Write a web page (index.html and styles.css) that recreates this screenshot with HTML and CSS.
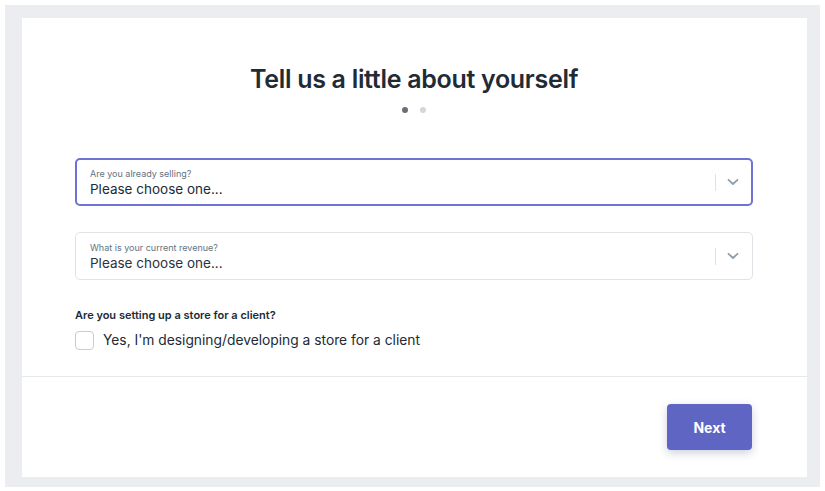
FILE: index.html
```html
<!DOCTYPE html>
<html lang="en">
<head>
<meta charset="utf-8">
<title>Tell us a little about yourself</title>
<link rel="stylesheet" href="styles.css">
</head>
<body>
<div class="frame">
  <div class="card">
    <div class="card-body">
      <h1 class="title">Tell us a little about yourself</h1>
      <div class="dots"><span class="dot active"></span><span class="dot"></span></div>
      <div class="select focused">
        <div class="select-text">
          <div class="select-label">Are you already selling?</div>
          <div class="select-value">Please choose one...</div>
        </div>
        <span class="select-sep"></span>
        <svg class="chev" width="12" height="8" viewBox="0 0 12 8"><path d="M1.5 1.8 L6 6 L10.5 1.8" fill="none" stroke="#919eab" stroke-width="1.8" stroke-linecap="round" stroke-linejoin="round"/></svg>
      </div>
      <div class="select">
        <div class="select-text">
          <div class="select-label">What is your current revenue?</div>
          <div class="select-value">Please choose one...</div>
        </div>
        <span class="select-sep"></span>
        <svg class="chev" width="12" height="8" viewBox="0 0 12 8"><path d="M1.5 1.8 L6 6 L10.5 1.8" fill="none" stroke="#919eab" stroke-width="1.8" stroke-linecap="round" stroke-linejoin="round"/></svg>
      </div>
      <div class="client-q">Are you setting up a store for a client?</div>
      <label class="check-row"><span class="checkbox"></span><span class="check-text">Yes, I'm designing/developing a store for a client</span></label>
    </div>
    <div class="card-footer">
      <button class="btn-next">Next</button>
    </div>
  </div>
</div>
</body>
</html>
```
FILE: styles.css
```css
html, body {
  margin: 0;
  padding: 0;
  background: #ffffff;
  font-family: Inter, "Liberation Sans", sans-serif;
  color: #212b36;
}
.frame {
  margin: 5px;
  padding: 13px 13px 10px 17px;
  background: #ebedf1;
}
.card {
  background: #ffffff;
  display: flex;
  flex-direction: column;
}
.card-body {
  padding: 44px 54px 26px 53px;
  border-bottom: 1px solid #e6e8eb;
}
.title {
  margin: 0;
  text-align: center;
  font-size: 25px;
  line-height: 34px;
  font-weight: 600;
  letter-spacing: -0.3px;
  color: #212b36;
}
.dots {
  display: flex;
  justify-content: center;
  gap: 12px;
  margin-top: 11px;
  margin-bottom: 45px;
}
.dot {
  width: 6px;
  height: 6px;
  border-radius: 50%;
  background: #d3d6da;
}
.dot.active {
  background: #6b6f75;
}
.select {
  display: flex;
  align-items: center;
  height: 46px;
  border: 1px solid #dfe3e8;
  border-radius: 5px;
  padding: 0 13px 0 14px;
  margin-bottom: 26px;
}
.select.focused {
  border: 2px solid #6e72d3;
  height: 44px;
  padding: 0 12px 0 13px;
  margin-bottom: 26px;
}
.select-text {
  flex: 1;
  padding-top: 2px;
}
.select-label {
  font-size: 9px;
  line-height: 12px;
  color: #637381;
}
.select-value {
  font-size: 13.5px;
  line-height: 19px;
  color: #212b36;
}
.select:not(.focused) .select-value {
  color: #2b333d;
}
.select-sep {
  width: 1px;
  height: 17px;
  background: #dfe3e8;
  margin-right: 11px;
}
.chev {
  display: block;
}
.client-q {
  margin-top: 28px;
  font-size: 11px;
  font-weight: 600;
  line-height: 14px;
  color: #212b36;
}
.check-row {
  display: flex;
  align-items: center;
  gap: 9px;
  margin-top: 8px;
}
.checkbox {
  width: 17px;
  height: 17px;
  border: 1px solid #c4cdd5;
  border-radius: 4px;
  background: #fff;
}
.check-text {
  font-size: 13.8px;
  line-height: 20px;
  color: #212b36;
}
.card-footer {
  display: flex;
  justify-content: flex-end;
  padding: 27px 55px 27px 0;
}
.btn-next {
  width: 85px;
  height: 46px;
  border: none;
  border-radius: 4px;
  background: #5f65c3;
  color: #ffffff;
  font-family: Inter, "Liberation Sans", sans-serif;
  font-size: 14px;
  font-weight: 700;
  box-shadow: 0 3px 8px rgba(60, 66, 140, 0.25);
}
```
